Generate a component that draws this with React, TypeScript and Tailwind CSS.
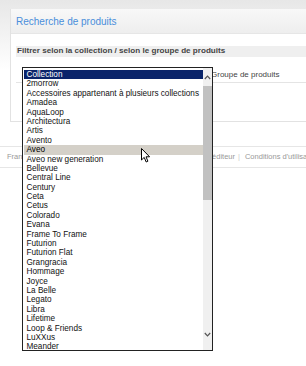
import React from "react";

const items = [
  "Collection",
  "2morrow",
  "Accessoires appartenant à plusieurs collections",
  "Amadea",
  "AquaLoop",
  "Architectura",
  "Artis",
  "Avento",
  "Aveo",
  "Aveo new generation",
  "Bellevue",
  "Central Line",
  "Century",
  "Ceta",
  "Cetus",
  "Colorado",
  "Evana",
  "Frame To Frame",
  "Futurion",
  "Futurion Flat",
  "Grangracia",
  "Hommage",
  "Joyce",
  "La Belle",
  "Legato",
  "Libra",
  "Lifetime",
  "Loop & Friends",
  "LuXXus",
  "Meander",
];

function Cursor() {
  return (
    <svg width="11" height="16" viewBox="0 0 11 16" className="absolute left-[141px] top-[148px]">
      <path
        d="M0.5 0.5 L0.5 12 L3.2 9.4 L5.2 14 L6.9 13.2 L5 8.8 L8.6 8.8 Z"
        fill="#fff"
        stroke="#000"
        strokeWidth="1"
        strokeLinejoin="round"
      />
    </svg>
  );
}

function Listbox() {
  return (
    <div className="absolute left-[22px] top-[67px] w-[191px] h-[284px] border border-[#222] bg-white flex overflow-hidden">
      <div className="flex-1 pt-[2px] pl-[1px] overflow-hidden">
        {items.map((it) => (
          <div
            key={it}
            className={`h-[9.4px] leading-[9.4px] pl-[2.5px] whitespace-nowrap text-[8.2px] ${
              it === "Collection" ? "bg-[#0a246a] text-white" : it === "Aveo" ? "bg-[#d4d0c8] text-black" : "text-[#111]"
            }`}
          >
            {it}
          </div>
        ))}
      </div>
      <div className="w-[9px] bg-[#f0f0f0] flex flex-col items-center">
        <div className="h-[18px] flex items-center justify-center">
          <svg width="7" height="5" viewBox="0 0 7 5">
            <path d="M0.8 4 L3.5 1.2 L6.2 4" fill="none" stroke="#555" strokeWidth="1.2" />
          </svg>
        </div>
        <div className="w-[9px] h-[114px] bg-[#c1c1c1]" />
        <div className="flex-1" />
        <div className="h-[24px] flex items-start justify-center pt-[6px]">
          <svg width="7" height="5" viewBox="0 0 7 5">
            <path d="M0.8 1 L3.5 3.8 L6.2 1" fill="none" stroke="#555" strokeWidth="1.2" />
          </svg>
        </div>
      </div>
    </div>
  );
}

export default function App() {
  return (
    <div
      className="relative w-[306px] h-[366px] overflow-hidden bg-[linear-gradient(#e7e7e7,#ffffff_70px)] text-[8px]"
      style={{ fontFamily: '"Liberation Sans", Arial, sans-serif' }}
    >
      <div className="pt-[9px] pl-[10px]">
        <div className="h-[113px] border-l border-b border-[#e2e2e2] bg-white">
          <div className="h-[25px] bg-[linear-gradient(#f8f8f8,#eeeeee)] border-b border-[#e6e6e6] flex items-center pl-[5px]">
            <h1 className="text-[10px] text-[#4a8edb]">Recherche de produits</h1>
          </div>
          <div className="pt-[12px] pl-[5px]">
            <div className="h-[11px] bg-[#efefef] flex items-center pl-[1px]">
              <p className="font-bold text-[#444] text-[8.1px] whitespace-nowrap">Filtrer selon la collection / selon le groupe de produits</p>
            </div>
            <div className="mt-[10px] h-[16px] border-b border-[#e4e4e4] flex items-center">
              <span className="pl-[12px] w-[195px] shrink-0 text-[#444]">Collection</span>
              <span className="text-[#444]">Groupe de produits</span>
            </div>
          </div>
        </div>
      </div>

      <div className="mt-[24px] h-[22px] border-t border-b border-[#e6e6e6] flex items-center text-[7.5px] text-[#999] whitespace-nowrap">
        <span className="pl-[7px] w-[180px] shrink-0">Français</span>
        <span className="w-[58px] shrink-0 text-right pr-[3px]">de l'éditeur</span>
        <span className="shrink-0 text-[#ccc]">|</span>
        <span className="pl-[5px] shrink-0">Conditions d'utilisation</span>
      </div>

      <Listbox />
      <Cursor />
    </div>
  );
}
